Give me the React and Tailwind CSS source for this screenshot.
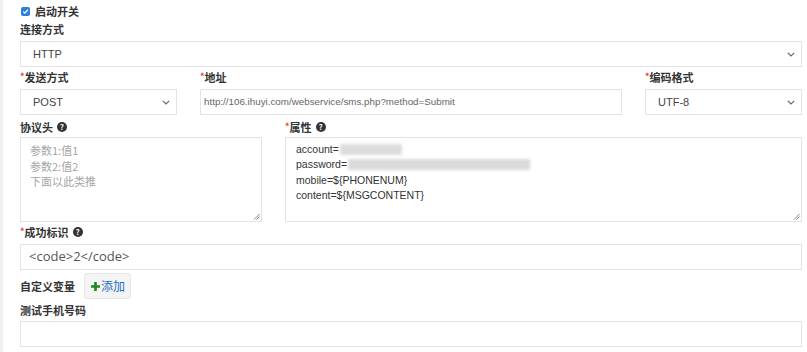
import React from "react";

const Chevron = () => (
  <svg width="8" height="5" viewBox="0 0 8 5" className="shrink-0">
    <path d="M0.8 0.8 L4 4 L7.2 0.8" fill="none" stroke="#666" strokeWidth="1.2" />
  </svg>
);

const Q = () => (
  <span className="inline-flex items-center justify-center w-[10px] h-[10px] rounded-full bg-[#333] text-white text-[7.5px] font-bold leading-none ml-[4px] align-middle">
    ?
  </span>
);

const Star = () => <span className="text-[#e33] text-[9px] align-top">*</span>;

const Label = ({ children, className = "" }) => (
  <div className={"h-[18px] leading-[18px] text-[11px] font-bold text-[#333] flex items-center " + className}>{children}</div>
);

const Select = ({ value, className = "" }) => (
  <div className={"h-[26px] border border-[#e3e3e3] bg-white flex items-center justify-between pl-[12px] pr-[6px] text-[11px] text-[#444] " + className}>
    <span className="font-['Liberation_Sans',sans-serif]">{value}</span>
    <Chevron />
  </div>
);

const Grip = () => (
  <svg width="7" height="7" viewBox="0 0 7 7" className="absolute right-[1px] bottom-[1px]">
    <path d="M1 6.5 L6.5 1 M3.5 6.5 L6.5 3.5" stroke="#777" strokeWidth="0.9" />
  </svg>
);

export default function App() {
  return (
    <div className="w-[807px] h-[352px] bg-white flex font-['Noto_Sans_CJK_SC','Noto_Sans',sans-serif] overflow-hidden">
      <div className="w-[3px] bg-[#eef0f3] shrink-0" />
      <div className="flex-1 flex flex-col pl-[17px] pr-[5px]">
        <div className="mt-[4px] h-[14px] flex items-center">
          <span className="w-[9px] h-[9px] rounded-[2px] bg-[#2a7fe0] flex items-center justify-center ml-[1px]">
            <svg width="7" height="7" viewBox="0 0 7 7">
              <path d="M1.2 3.6 L2.8 5.1 L5.9 1.8" fill="none" stroke="white" strokeWidth="1.3" />
            </svg>
          </span>
          <span className="ml-[5px] text-[11px] font-bold text-[#333]">启动开关</span>
        </div>
        <Label className="mt-[2px]">连接方式</Label>
        <Select value="HTTP" className="mt-[3px]" />
        <div className="grid grid-cols-[157px_1fr_157px] gap-x-[23px] mt-[1px]">
          <Label><Star />发送方式</Label>
          <Label><Star />地址</Label>
          <Label><Star />编码格式</Label>
          <Select value="POST" className="mt-[3px]" />
          <div className="mt-[3px] h-[26px] border border-[#e3e3e3] flex items-center pl-[3px] text-[9.8px] text-[#666] font-['Liberation_Sans',sans-serif]">
            http://106.ihuyi.com/webservice/sms.php?method=Submit
          </div>
          <Select value="UTF-8" className="mt-[3px]" />
        </div>
        <div className="grid grid-cols-[242px_1fr] gap-x-[23px] mt-[3px]">
          <Label>协议头<Q /></Label>
          <Label><Star />属性<Q /></Label>
          <div className="relative mt-[1px] h-[85px] border border-[#e3e3e3] pl-[9px] pt-[5px] text-[11px] leading-[15.5px] text-[#a5a5a5]">
            <div>参数1:值1</div>
            <div>参数2:值2</div>
            <div>下面以此类推</div>
            <Grip />
          </div>
          <div className="relative mt-[1px] h-[85px] border border-[#e3e3e3] pl-[10px] pt-[4px] text-[10.5px] leading-[15.3px] text-[#333] font-['Liberation_Sans',sans-serif]">
            <div className="flex items-center">account=<span className="inline-block w-[62px] h-[11px] bg-[#dcdcdc] blur-[1.5px] ml-[1px]" /></div>
            <div className="flex items-center">password=<span className="inline-block w-[182px] h-[11px] bg-[#dadada] blur-[1.5px] ml-[1px]" /></div>
            <div>mobile=${"{"}PHONENUM{"}"}</div>
            <div>content=${"{"}MSGCONTENT{"}"}</div>
            <Grip />
          </div>
        </div>
        <Label className="mt-[1px]"><Star />成功标识<Q /></Label>
        <div className="mt-[3px] h-[26px] border border-[#e3e3e3] flex items-center pl-[8px] text-[13px] text-[#555] font-['Open_Sans',sans-serif]">
          &lt;code&gt;2&lt;/code&gt;
        </div>
        <div className="mt-[3px] h-[26px] flex items-center">
          <span className="text-[11px] font-bold text-[#333] w-[64px]">自定义变量</span>
          <button className="h-[26px] pl-[6px] pr-[5px] rounded-[3px] border border-[#e6e6e6] bg-[#f4f4f4] flex items-center text-[12px] text-[#1e6fc0]">
            <svg width="9" height="9" viewBox="0 0 9 9" className="mr-[1px]">
              <path d="M3.2 0 H5.8 V3.2 H9 V5.8 H5.8 V9 H3.2 V5.8 H0 V3.2 H3.2 Z" fill="#1a8a1a" />
            </svg>
            添加
          </button>
        </div>
        <Label className="mt-[2px]">测试手机号码</Label>
        <div className="mt-[2px] h-[26px] border border-[#e3e3e3]" />
      </div>
    </div>
  );
}
